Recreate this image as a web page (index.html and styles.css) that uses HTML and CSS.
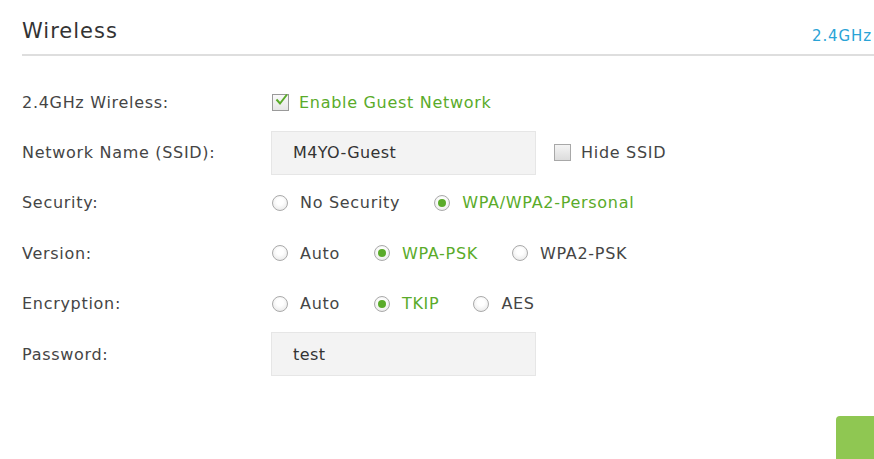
FILE: index.html
```html
<!DOCTYPE html>
<html>
<head>
<meta charset="utf-8">
<link rel="stylesheet" href="styles.css">
</head>
<body>
<div class="page">
  <div class="header">
    <h1 class="title">Wireless</h1>
    <span class="band">2.4GHz</span>
  </div>
  <div class="form">
    <div class="label">2.4GHz Wireless:</div>
    <div class="field">
      <span class="opt on"><span class="check checked"><svg viewBox="0 0 16 16" width="16" height="16"><path d="M3.5 7.5 L7 11.5 L14 2.5" fill="none" stroke="#5aab2a" stroke-width="2"/></svg></span>Enable Guest Network</span>
    </div>

    <div class="label">Network Name (SSID):</div>
    <div class="field">
      <div class="input">M4YO-Guest</div>
      <span class="opt hide"><span class="check"></span>Hide SSID</span>
    </div>

    <div class="label">Security:</div>
    <div class="field">
      <span class="opt"><span class="radio"></span>No Security</span>
      <span class="opt on"><span class="radio sel"></span>WPA/WPA2-Personal</span>
    </div>

    <div class="label">Version:</div>
    <div class="field">
      <span class="opt"><span class="radio"></span>Auto</span>
      <span class="opt on"><span class="radio sel"></span>WPA-PSK</span>
      <span class="opt"><span class="radio"></span>WPA2-PSK</span>
    </div>

    <div class="label">Encryption:</div>
    <div class="field">
      <span class="opt"><span class="radio"></span>Auto</span>
      <span class="opt on"><span class="radio sel"></span>TKIP</span>
      <span class="opt"><span class="radio"></span>AES</span>
    </div>

    <div class="label">Password:</div>
    <div class="field">
      <div class="input">test</div>
    </div>
  </div>
  <div class="footer">
    <div class="save"></div>
  </div>
</div>
</body>
</html>
```
FILE: styles.css
```css
html, body {
  margin: 0;
  padding: 0;
  background: #fff;
  overflow: hidden;
  height: 459px;
}
.page {
  font-family: "DejaVu Sans", Verdana, sans-serif;
  color: #454545;
  padding-left: 22px;
}
.header {
  display: flex;
  align-items: flex-end;
  justify-content: space-between;
  height: 54px;
  border-bottom: 2px solid #dedede;
}
.title {
  margin: 0 0 11px 0;
  font-size: 21px;
  font-weight: normal;
  letter-spacing: 1px;
  color: #333;
  line-height: 24px;
}
.band {
  font-size: 15px;
  letter-spacing: 0.9px;
  color: #2aa3d6;
  margin: 0 2px 9px 0;
  line-height: 18px;
}
.form {
  display: grid;
  grid-template-columns: 249px 1fr;
  grid-auto-rows: 50.4px;
  margin-top: 21px;
  font-size: 16px;
  letter-spacing: 0.7px;
}
.label {
  display: flex;
  align-items: center;
  color: #454545;
}
.field {
  display: flex;
  align-items: center;
  gap: 33px;
}
.opt {
  display: inline-flex;
  align-items: center;
  color: #454545;
}
.opt.on {
  color: #5aab2a;
}
.check {
  width: 17px;
  height: 17px;
  box-sizing: border-box;
  border: 1px solid #a8a8a8;
  background: linear-gradient(#f4f4f4, #dcdcdc);
  margin-left: 1px;
  margin-right: 10px;
  position: relative;
  display: inline-block;
}
.check.checked {
  background: linear-gradient(#fafafa, #e6e6e6);
  border-color: #9a9a9a;
}
.check svg {
  position: absolute;
  left: 0;
  top: -3px;
}
.radio {
  width: 16px;
  height: 16px;
  box-sizing: border-box;
  border-radius: 50%;
  border: 1px solid #aaa;
  background: radial-gradient(circle at 50% 40%, #fff 30%, #e2e2e2 100%);
  margin-left: 1px;
  margin-right: 12px;
  display: inline-block;
  position: relative;
}
.radio.sel::after {
  content: "";
  position: absolute;
  left: 3px;
  top: 3px;
  width: 8px;
  height: 8px;
  border-radius: 50%;
  background: #5aab2a;
}
.input {
  width: 265px;
  height: 44px;
  box-sizing: border-box;
  background: #f3f3f3;
  border: 1px solid #e6e6e6;
  padding-left: 21px;
  display: flex;
  align-items: center;
  color: #333;
  letter-spacing: 0.4px;
}
.hide {
  margin-left: -16px;
}
.footer {
  display: flex;
  justify-content: flex-end;
  margin-top: 37px;
}
.save {
  width: 38px;
  height: 60px;
  background: #8fc752;
  border-top-left-radius: 4px;
}
```
